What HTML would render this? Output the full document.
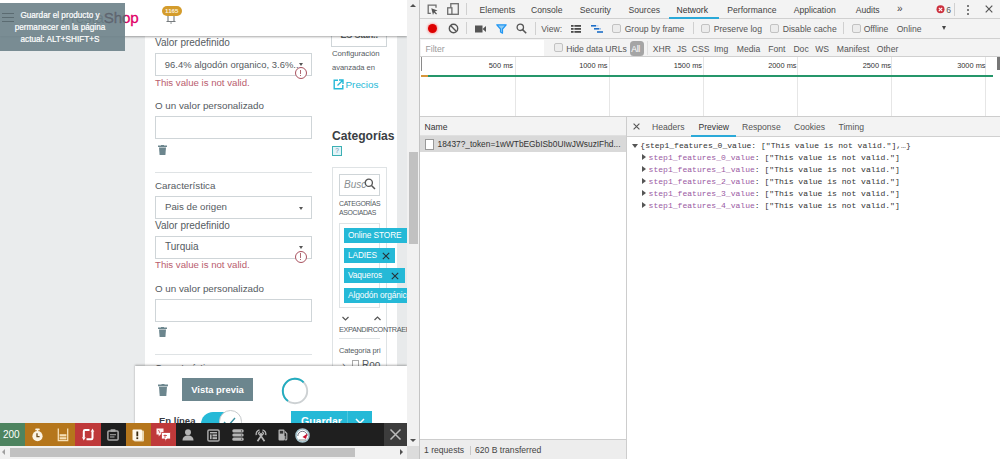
<!DOCTYPE html>
<html><head><meta charset="utf-8">
<style>
*{box-sizing:border-box;margin:0;padding:0}
html,body{width:1000px;height:459px;overflow:hidden;background:#fff;font-family:"Liberation Sans",sans-serif}
.a{position:absolute}
svg{display:block}
.t{position:absolute;white-space:nowrap;line-height:1}
/* page */
#page{position:absolute;left:0;top:0;width:407px;height:459px;background:#eaeced;overflow:hidden}
#panel{position:absolute;left:145px;top:0;width:252px;height:459px;background:#fff}
.lbl{position:absolute;white-space:nowrap;font-size:10px;color:#555b5f;line-height:1}
.inp{position:absolute;border:1px solid #cfd5d8;background:#fff}
.err{position:absolute;white-space:nowrap;font-size:9.65px;color:#b95c6e;line-height:1}
.tag{position:absolute;left:344px;height:15px;background:#25b9d7;color:#fff;font-size:8.3px;letter-spacing:-0.1px;line-height:15px;padding-left:4px;white-space:nowrap;overflow:hidden}
/* devtools */
#dt{position:absolute;left:419px;top:0;width:581px;height:459px;background:#fff;border-left:1px solid #c4c4c4;overflow:hidden}
.dtt{position:absolute;white-space:nowrap;font-size:8.6px;color:#333;line-height:1}
.sep{position:absolute;width:1px;background:#d0d0d0}
.cb{position:absolute;width:8.5px;height:8.5px;border:1px solid #c2c2c2;background:#ececec;border-radius:2px}
.mono{position:absolute;white-space:nowrap;font-family:"Liberation Mono",monospace;font-size:8.05px;line-height:1;color:#333}
.key{color:#9a5aa3}
</style></head><body>

<div id="page">
  <div id="panel"></div>
  <!-- right gray column -->
  <div class="a" style="left:397px;top:0;width:10px;height:459px;background:#e8eaeb"></div>

  <!-- form section 1 -->
  <div class="lbl" style="left:155px;top:38px">Valor predefinido</div>
  <div class="inp" style="left:155px;top:53px;width:157px;height:23px"></div>
  <div class="t" style="left:164.8px;top:60.3px;font-size:9.45px;color:#555b5f">96.4% algodón organico, 3.6%..</div>
  <div class="a" style="z-index:1;left:298.5px;top:63px;width:0;height:0;border-left:2.5px solid transparent;border-right:2.5px solid transparent;border-top:3px solid #555"></div>
  <div class="a" style="left:294.5px;top:67px;width:12px;height:12px;border:1.2px solid #a9525f;border-radius:50%;background:#fff"></div>
  <div class="a" style="left:300px;top:69.5px;width:1.4px;height:4.5px;background:#b06a74"></div>
  <div class="a" style="left:300px;top:75px;width:1.4px;height:1.4px;background:#b06a74"></div>
  <div class="err" style="left:155px;top:77.5px">This value is not valid.</div>
  <div class="lbl" style="left:155px;top:100.5px;font-size:9.8px">O un valor personalizado</div>
  <div class="inp" style="left:155px;top:116px;width:157px;height:23px"></div>
  <div class="a" style="left:158px;top:145px;width:9px;height:10px"><svg width="9" height="10" viewBox="0 0 9 10"><rect x="0" y="0.5" width="9" height="1.5" fill="#6c868e"/><rect x="3" y="0" width="3" height="1" fill="#6c868e"/><path d="M1 2.5h7l-0.6 7.5h-5.8z" fill="#6c868e"/></svg></div>
  <div class="a" style="left:155px;top:172px;width:157px;height:1px;background:#dfe3e5"></div>

  <!-- form section 2 -->
  <div class="lbl" style="left:155px;top:181px;font-size:9.8px">Característica</div>
  <div class="inp" style="left:155px;top:196px;width:157px;height:23px"></div>
  <div class="t" style="left:165px;top:202px;font-size:9.7px;color:#555b5f">Pais de origen</div>
  <div class="a" style="left:299px;top:207px;width:0;height:0;border-left:2.5px solid transparent;border-right:2.5px solid transparent;border-top:3px solid #555"></div>
  <div class="lbl" style="left:155px;top:221px">Valor predefinido</div>
  <div class="inp" style="left:155px;top:236px;width:157px;height:23px"></div>
  <div class="t" style="left:165px;top:242px;font-size:10px;color:#555b5f">Turquia</div>
  <div class="a" style="z-index:1;left:298.5px;top:246px;width:0;height:0;border-left:2.5px solid transparent;border-right:2.5px solid transparent;border-top:3px solid #555"></div>
  <div class="a" style="left:294.5px;top:250.5px;width:12px;height:12px;border:1.2px solid #a9525f;border-radius:50%;background:#fff"></div>
  <div class="a" style="left:300px;top:253px;width:1.4px;height:4.5px;background:#b06a74"></div>
  <div class="a" style="left:300px;top:258.5px;width:1.4px;height:1.4px;background:#b06a74"></div>
  <div class="err" style="left:155px;top:260px">This value is not valid.</div>
  <div class="lbl" style="left:155px;top:284px;font-size:9.8px">O un valor personalizado</div>
  <div class="inp" style="left:155px;top:299px;width:157px;height:23px"></div>
  <div class="a" style="left:158px;top:327px;width:9px;height:10px"><svg width="9" height="10" viewBox="0 0 9 10"><rect x="0" y="0.5" width="9" height="1.5" fill="#6c868e"/><rect x="3" y="0" width="3" height="1" fill="#6c868e"/><path d="M1 2.5h7l-0.6 7.5h-5.8z" fill="#6c868e"/></svg></div>
  <div class="a" style="left:155px;top:354px;width:157px;height:1px;background:#dfe3e5"></div>
  <div class="lbl" style="left:155px;top:362.5px;font-size:9.8px">Característica</div>

  <!-- right column -->
  <div class="a" style="left:331px;top:20px;width:56px;height:27px;border:1px solid #cfd5d8;background:#fff"></div>
  <div class="t" style="left:340.5px;top:30.5px;font-size:9px;letter-spacing:-0.2px;font-weight:bold;color:#5a5f64">ES Stan..</div>
  <div class="t" style="left:332px;top:50.2px;font-size:7.8px;letter-spacing:-0.05px;color:#555b5f">Configuración</div>
  <div class="t" style="left:332px;top:63.7px;font-size:7.6px;letter-spacing:-0.05px;color:#555b5f">avanzada en</div>
  <div class="a" style="left:333px;top:79px;width:11px;height:11px"><svg width="11" height="11" viewBox="0 0 11 11"><path d="M5 1.2H1.2v8.6h8.6V6" fill="none" stroke="#25b9d7" stroke-width="1.4"/><path d="M6 1h4v4M10 1L4.5 6.5" fill="none" stroke="#25b9d7" stroke-width="1.4"/></svg></div>
  <div class="t" style="left:345.5px;top:80.3px;font-size:9.9px;color:#25b9d7">Precios</div>

  <div class="t" style="left:332px;top:130.3px;font-size:12.1px;font-weight:bold;color:#3a3e44">Categorías</div>
  <div class="a" style="left:331.5px;top:145.5px;width:10.5px;height:10.5px;border:1.7px solid #3cb0b4;background:#e3f4f8"></div>
  <div class="t" style="left:335.3px;top:147.5px;font-size:6.5px;color:#6a8fb0">?</div>

  <div class="a" style="left:332px;top:167px;width:55px;height:260px;border:1px solid #dfe3e5"></div>
  <div class="a" style="left:339px;top:174px;width:41px;height:22px;border:1px solid #cfd5d8;background:#fff"></div>
  <div class="t" style="left:344px;top:180px;font-size:10px;font-style:italic;color:#8a8f92">Busc</div>
  <div class="a" style="left:364px;top:178px;width:12px;height:12px"><svg width="12" height="12" viewBox="0 0 12 12"><circle cx="4.8" cy="4.8" r="3.6" fill="none" stroke="#555" stroke-width="1.3"/><path d="M7.5 7.5L11 11" stroke="#555" stroke-width="1.5"/></svg></div>
  <div class="t" style="left:339px;top:201px;font-size:6.9px;letter-spacing:-0.35px;color:#555b5f">CATEGORÍAS</div>
  <div class="t" style="left:339px;top:210.3px;font-size:6.9px;letter-spacing:-0.35px;color:#555b5f">ASOCIADAS</div>
  <div class="a" style="left:339px;top:223px;width:41px;height:85px;border:1px solid #dfe3e5"></div>
  <div class="tag" style="top:227.5px;width:63px">Online STORE</div>
  <div class="tag" style="top:247.5px;width:51px">LADIES<svg style="position:absolute;left:38px;top:4px" width="8" height="8" viewBox="0 0 8 8"><path d="M0.8 0.8l6.4 6.4M7.2 0.8L0.8 7.2" stroke="#263238" stroke-width="1.1"/></svg></div>
  <div class="tag" style="top:267.5px;width:61px">Vaqueros<svg style="position:absolute;left:47px;top:4px" width="8" height="8" viewBox="0 0 8 8"><path d="M0.8 0.8l6.4 6.4M7.2 0.8L0.8 7.2" stroke="#263238" stroke-width="1.1"/></svg></div>
  <div class="tag" style="top:288px;width:63px">Algodón orgánico</div>
  <div class="a" style="left:342px;top:316px;width:7px;height:5px"><svg width="7" height="5" viewBox="0 0 7 5"><path d="M0.5 1l3 3 3-3" fill="none" stroke="#555" stroke-width="1.2"/></svg></div>
  <div class="a" style="left:374px;top:316px;width:7px;height:5px"><svg width="7" height="5" viewBox="0 0 7 5"><path d="M0.5 4l3-3 3 3" fill="none" stroke="#555" stroke-width="1.2"/></svg></div>
  <div class="t" style="left:339px;top:326px;font-size:7.3px;color:#555b5f;letter-spacing:-0.38px">EXPANDIRCONTRAER</div>
  <div class="a" style="left:339px;top:338px;width:41px;height:1px;background:#dfe3e5"></div>
  <div class="t" style="left:339px;top:346.5px;font-size:7.5px;letter-spacing:-0.15px;color:#555b5f">Categoría pri</div>
  <div class="t" style="left:342px;top:361px;font-size:10px;color:#555b5f">›</div>
  <div class="a" style="left:352px;top:360px;width:7px;height:8px;border:1px solid #aaa"></div>
  <div class="t" style="left:362px;top:360px;font-size:10px;color:#555b5f">Roo</div>

  <!-- header -->
  <div class="a" style="left:0;top:0;width:407px;height:36px;background:#fff;box-shadow:0 1px 2px rgba(0,0,0,.35)"></div>
  <div class="t" style="left:61px;top:10px;font-size:15.2px;color:#6c6f72;letter-spacing:-0.2px;-webkit-text-stroke:0.3px #df0067"><span style="-webkit-text-stroke:0">Presta</span><span id="shop" style="color:#df0067">Shop</span></div>
  <div class="a" style="left:166px;top:15px;width:10px;height:8px"><svg width="10" height="9" viewBox="0 0 10 9"><path d="M2 0v6M8 0v6M0.5 6.5h9" stroke="#767b7e" stroke-width="1.1" fill="none"/><rect x="4.3" y="7.5" width="1.5" height="1" fill="#767b7e"/></svg></div>
  <div class="a" style="left:162px;top:6px;width:19.5px;height:9.5px;background:#d49c2c;border-radius:5px"></div>
  <div class="t" style="left:162px;top:8px;width:19.5px;text-align:center;font-size:6.2px;font-weight:bold;color:#fbf0dc">1165</div>

  <!-- tooltip -->
  <div class="a" style="left:0;top:2.5px;width:125px;height:48px;background:rgba(112,132,140,.93)"></div>
  <div class="a" style="left:2px;top:12.5px;width:11.5px;height:1.5px;background:#5b6b71"></div>
  <div class="a" style="left:2px;top:16.5px;width:11.5px;height:1.5px;background:#5b6b71"></div>
  <div class="a" style="left:2px;top:20.5px;width:11.5px;height:1.5px;background:#5b6b71"></div>
  <div class="a" style="left:0;top:0;width:125.5px;height:40px;overflow:hidden"><div class="t" style="left:61px;top:10px;font-size:15.2px;color:rgba(70,82,88,.12);letter-spacing:-0.2px">Presta<span style="color:rgba(70,82,88,.45);-webkit-text-stroke:0.3px rgba(70,82,88,.45)">Shop</span></div></div>
  <div class="t" style="left:0;top:10.3px;width:120px;text-align:center;font-size:8.2px;color:#fff;line-height:11.9px;white-space:normal;-webkit-text-stroke:0.2px #fff">Guardar el producto y<br>permanecer en la página<br>actual: ALT+SHIFT+S</div>

  <!-- sticky footer -->
  <div class="a" style="left:135px;top:366px;width:272px;height:60px;background:#fff;box-shadow:0 -1px 2px rgba(0,0,0,.3)"></div>
  <div class="a" style="left:158px;top:384px;width:10px;height:12px"><svg width="10" height="12" viewBox="0 0 10 12"><rect x="0" y="0.5" width="10" height="1.8" fill="#6c868e"/><rect x="3.5" y="0" width="3" height="1" fill="#6c868e"/><path d="M1 2.8h8l-0.7 9.2h-6.6z" fill="#6c868e"/></svg></div>
  <div class="a" style="left:182px;top:378px;width:71px;height:23px;background:#6c868e"></div>
  <div class="t" style="left:182px;top:384.5px;width:71px;text-align:center;font-size:9.4px;font-weight:bold;color:#fff">Vista previa</div>
  <svg class="a" style="left:281px;top:376.5px" width="28" height="28" viewBox="0 0 28 28"><circle cx="14" cy="14" r="12.2" fill="none" stroke="#cdd1d3" stroke-width="1.9"/><path d="M22.63 5.37A12.2 12.2 0 1 0 7.00 23.99" fill="none" stroke="#22adc0" stroke-width="1.9"/></svg>
  <div class="t" style="left:159px;top:415.5px;font-size:9.5px;font-weight:bold;color:#363a41">En línea</div>
  <div class="a" style="left:200.5px;top:412px;width:40px;height:24px;border-radius:12px;background:#25b9d7"></div>
  <div class="a" style="left:218.5px;top:410px;width:23.5px;height:23.5px;border-radius:50%;background:#fff;border:1px solid #c5c9cb"></div>
  <svg class="a" style="left:222px;top:415px" width="16" height="12" viewBox="0 0 16 12"><path d="M2 7l4 4 7-8" fill="none" stroke="#3b8fa0" stroke-width="1.4"/></svg>
  <div class="a" style="left:291px;top:411px;width:56px;height:20px;background:#25b9d7"></div>
  <div class="a" style="left:347px;top:411px;width:1px;height:20px;background:#4fc6de"></div>
  <div class="a" style="left:348px;top:411px;width:24px;height:20px;background:#25b9d7"></div>
  <div class="t" style="left:301px;top:416px;font-size:10.5px;font-weight:bold;color:#fff">Guardar</div>
  <svg class="a" style="left:355px;top:418px" width="10" height="6" viewBox="0 0 10 6"><path d="M1 1l4 4 4-4" fill="none" stroke="#fff" stroke-width="1.5"/></svg>

  <!-- debug toolbar -->
  <div class="a" style="left:0;top:423px;width:407px;height:23px;background:#1f1f1f"></div>
  <div class="a" style="left:0;top:423px;width:25px;height:23px;background:#4e8460"></div>
  <div class="t" style="left:3px;top:430px;font-size:10px;color:#fff">200</div>
  <div class="a" style="left:25px;top:423px;width:50px;height:23px;background:#b5761c"></div>
  <div class="a" style="left:75px;top:423px;width:26px;height:23px;background:#bf393a"></div>
  <div class="a" style="left:126px;top:423px;width:25px;height:23px;background:#b5761c"></div>
  <div class="a" style="left:151px;top:423px;width:25px;height:23px;background:#bf393a"></div>

  <!-- toolbar icons -->
  <svg class="a" style="left:31px;top:428px" width="13" height="14" viewBox="0 0 13 14"><rect x="4.3" y="0.5" width="4.4" height="1.8" rx="0.6" fill="#fbf3e4"/><rect x="5.8" y="2" width="1.4" height="1.5" fill="#fbf3e4"/><circle cx="6.5" cy="8.2" r="5.1" fill="#fbf3e4"/><path d="M6 5.3v3.4h2.6" fill="none" stroke="#6b4a1a" stroke-width="1.3"/></svg>
  <svg class="a" style="left:57px;top:428px" width="12" height="14" viewBox="0 0 12 14"><path d="M1.3 0.5v12.2h9.4V0.5" fill="none" stroke="#f6dfb5" stroke-width="1.3"/><rect x="2.6" y="6.2" width="6.8" height="2.2" fill="#f6dfb5"/><rect x="2.6" y="9.2" width="6.8" height="2.2" fill="#f6dfb5"/></svg>
  <svg class="a" style="left:82px;top:428px" width="13" height="13" viewBox="0 0 13 13"><path d="M7.5 2H3Q1.8 2 1.8 3.2V9.5" fill="none" stroke="#fff" stroke-width="2"/><path d="M0 9.2h3.6L1.8 12.5z" fill="#fff"/><path d="M4.5 11.2H9.3Q10.5 11.2 10.5 10V3.5" fill="none" stroke="#fff" stroke-width="2"/><path d="M8.7 3.8h3.6L10.5 0.5z" fill="#fff"/></svg>
  <svg class="a" style="left:107px;top:429px" width="12" height="12" viewBox="0 0 12 12"><rect x="0.9" y="1.9" width="10.2" height="9.2" rx="1" fill="none" stroke="#a9a9a9" stroke-width="1.5"/><rect x="3.5" y="0.3" width="5" height="2.5" rx="0.5" fill="#a9a9a9"/><rect x="3" y="5" width="6" height="1.3" fill="#8d8d8d"/><rect x="3" y="7.3" width="4.5" height="1.3" fill="#8d8d8d"/></svg>
  <svg class="a" style="left:132px;top:428.5px" width="12" height="13" viewBox="0 0 12 13"><rect x="2" y="1.5" width="10" height="11" rx="1" fill="#e8d6b2"/><rect x="0.5" y="0.5" width="9.5" height="11" rx="1" fill="#fff8ec"/><rect x="4.4" y="2.5" width="1.8" height="4.8" fill="#3a2a10"/><rect x="4.4" y="8.3" width="1.8" height="1.8" fill="#3a2a10"/></svg>
  <svg class="a" style="left:156px;top:428px" width="15" height="14" viewBox="0 0 15 14"><path d="M0.5 0.5h7v6h-3l-1.8 2v-2H0.5z" fill="#fff0f0"/><path d="M5.5 4.5h9v6.5h-3.5l-2 2.5v-2.5h-3.5z" fill="#fff" stroke="#c0393a" stroke-width="0.8"/><path d="M2.5 2l1.5 3M9 6.5v3.5M7.5 7.5h3.5" stroke="#c0393a" stroke-width="0.8"/></svg>
  <svg class="a" style="left:182px;top:428.5px" width="12" height="12" viewBox="0 0 12 12"><circle cx="6" cy="3.3" r="3" fill="#b5b5b5"/><path d="M0.5 11.5c0-3.5 2.2-5 5.5-5s5.5 1.5 5.5 5z" fill="#b5b5b5"/></svg>
  <svg class="a" style="left:206.5px;top:428.5px" width="13" height="13" viewBox="0 0 13 13"><rect x="0.9" y="0.9" width="11.2" height="11.2" rx="1.3" fill="none" stroke="#a9a9a9" stroke-width="1.5"/><rect x="3" y="3" width="7" height="1.4" fill="#b5b5b5"/><rect x="3" y="5.4" width="1.6" height="4.8" fill="#b5b5b5"/><rect x="5.5" y="5.4" width="4.5" height="2" fill="#b5b5b5"/><rect x="5.5" y="8.2" width="4.5" height="2" fill="#b5b5b5"/></svg>
  <svg class="a" style="left:231.5px;top:428.5px" width="12" height="12" viewBox="0 0 12 12"><rect x="0.3" y="0.3" width="11.4" height="3.2" rx="1.5" fill="#b5b5b5"/><rect x="0.3" y="4.4" width="11.4" height="3.2" rx="1.5" fill="#b5b5b5"/><rect x="0.3" y="8.5" width="11.4" height="3.2" rx="1.5" fill="#b5b5b5"/><circle cx="9.5" cy="1.9" r="0.6" fill="#333"/><circle cx="9.5" cy="6" r="0.6" fill="#333"/><circle cx="9.5" cy="10.1" r="0.6" fill="#333"/></svg>
  <svg class="a" style="left:254px;top:428px" width="14" height="14" viewBox="0 0 14 14"><path d="M3.5 13.2L8.6 5.8M10.5 13.2L5.4 5.8" fill="none" stroke="#b5b5b5" stroke-width="1.7"/><circle cx="7" cy="6.5" r="1.6" fill="#b5b5b5"/><path d="M2.2 7.2A5 5 0 0 1 5.5 1.8M11.8 7.2A5 5 0 0 0 8.5 1.8" fill="none" stroke="#b5b5b5" stroke-width="1.3"/><path d="M4.2 6.6A3 3 0 0 1 6 3.8M9.8 6.6A3 3 0 0 0 8 3.8" fill="none" stroke="#b5b5b5" stroke-width="1.1"/></svg>
  <svg class="a" style="left:277.5px;top:429px" width="10" height="12" viewBox="0 0 10 12"><rect x="0.5" y="0.5" width="6" height="11" rx="1" fill="#b5b5b5"/><rect x="1.8" y="1.8" width="3.4" height="2.8" fill="#333"/><path d="M6.8 2.5l2 2v5.5a1 1 0 0 1-2 0V7" fill="none" stroke="#b5b5b5" stroke-width="1.1"/></svg>
  <svg class="a" style="left:295px;top:427.5px" width="15" height="15" viewBox="0 0 15 15"><circle cx="7.5" cy="7.5" r="6.5" fill="#fff" stroke="#a8c6cf" stroke-width="1.6"/><path d="M2.8 8a4.7 4.7 0 0 1 9.4 0" fill="none" stroke="#556" stroke-width="0.8"/><path d="M7.5 9L12.5 5.5 11 11z" fill="#c8102e"/><path d="M4 12h7" stroke="#888" stroke-width="1"/></svg>
  <div class="a" style="left:384px;top:423px;width:23px;height:23px;background:#3c3c3c"></div>
  <svg class="a" style="left:389px;top:428px" width="13" height="13" viewBox="0 0 13 13"><path d="M1.5 1.5l10 10M11.5 1.5l-10 10" stroke="#bbb" stroke-width="1.5"/></svg>

  <!-- horizontal scrollbar -->
  <div class="a" style="left:0;top:446px;width:407px;height:13px;background:#f1f1f1"></div>
  <div class="a" style="left:10px;top:448px;width:345px;height:9px;background:#c1c1c1"></div>
</div>

<!-- vertical page scrollbar -->
<div class="a" style="left:407px;top:0;width:12px;height:446px;background:#f1f1f1"></div>
<div class="a" style="left:409px;top:152px;width:9px;height:92px;background:#c1c1c1"></div>
<div class="a" style="left:407px;top:446px;width:12px;height:13px;background:#dcdcdc"></div>

<div class="a" style="left:410px;top:4px;width:0;height:0;border-left:3.5px solid transparent;border-right:3.5px solid transparent;border-bottom:3.5px solid #505050"></div>
<div class="a" style="left:410px;top:438.5px;width:0;height:0;border-left:3.5px solid transparent;border-right:3.5px solid transparent;border-top:3.5px solid #505050"></div>
<div class="a" style="left:2px;top:449px;width:0;height:0;border-top:3.5px solid transparent;border-bottom:3.5px solid transparent;border-right:3.5px solid #a0a0a0"></div>
<div class="a" style="left:400px;top:449px;width:0;height:0;border-top:3.5px solid transparent;border-bottom:3.5px solid transparent;border-left:3.5px solid #505050"></div>
<div id="dt">
  <!-- tab bar -->
  <div class="a" style="left:0;top:0;width:581px;height:19px;background:#f3f3f3;border-bottom:1px solid #d0d0d0"></div>
  <svg class="a" style="left:7px;top:3.5px" width="11" height="11" viewBox="0 0 11 11"><path d="M3.8 9.3H1.2V1.2h7.8v2.6" fill="none" stroke="#6e6e6e" stroke-width="1.3"/><path d="M4.3 4.3l6.2 2.2-2.6 1 2.1 2.2-0.9 0.9-2.1-2.2-1 2.6z" fill="#555"/></svg>
  <svg class="a" style="left:26.5px;top:3px" width="12" height="12" viewBox="0 0 12 12"><rect x="3.8" y="0.7" width="7.5" height="10.6" fill="none" stroke="#6e6e6e" stroke-width="1.3"/><rect x="0.7" y="4.8" width="4.2" height="6.5" fill="#f3f3f3" stroke="#6e6e6e" stroke-width="1.3"/></svg>
  <div class="sep" style="left:46px;top:3px;height:12px"></div>
  <div class="dtt" style="left:59.5px;top:5.6px;color:#444">Elements</div>
  <div class="dtt" style="left:111px;top:5.6px;color:#444">Console</div>
  <div class="dtt" style="left:159.8px;top:5.6px;color:#444">Security</div>
  <div class="dtt" style="left:208.5px;top:5.6px;color:#444">Sources</div>
  <div class="dtt" style="left:256.5px;top:5.6px;color:#333">Network</div>
  <div class="a" style="left:248.5px;top:17px;width:50.5px;height:2px;background:#2ba9d8"></div>
  <div class="dtt" style="left:307.3px;top:5.6px;color:#444">Performance</div>
  <div class="dtt" style="left:373.7px;top:5.6px;color:#444">Application</div>
  <div class="dtt" style="left:435.7px;top:5.6px;color:#444">Audits</div>
  <div class="dtt" style="left:477px;top:3.5px;color:#444;font-size:10px">»</div>
  <svg class="a" style="left:515.5px;top:4.5px" width="9" height="9" viewBox="0 0 9 9"><circle cx="4.5" cy="4.3" r="4" fill="#cc2f3c"/><path d="M2.8 2.8l3.4 3.4M6.2 2.8l-3.4 3.4" stroke="#fff" stroke-width="1.1"/></svg>
  <div class="dtt" style="left:526.3px;top:5.6px;color:#555">6</div>
  <div class="sep" style="left:534px;top:3px;height:13px"></div>
  <div class="a" style="left:547.3px;top:4.5px;width:2px;height:2px;background:#555;border-radius:1px"></div>
  <div class="a" style="left:547.3px;top:8.5px;width:2px;height:2px;background:#555;border-radius:1px"></div>
  <div class="a" style="left:547.3px;top:12.5px;width:2px;height:2px;background:#555;border-radius:1px"></div>
  <svg class="a" style="left:564.8px;top:4.8px" width="8" height="8" viewBox="0 0 8 8"><path d="M0.7 0.7l6.6 6.6M7.3 0.7l-6.6 6.6" stroke="#555" stroke-width="1.2"/></svg>

  <!-- toolbar 2 -->
  <div class="a" style="left:0;top:19px;width:581px;height:20px;background:#f3f3f3;border-bottom:1px solid #d0d0d0"></div>
  <div class="a" style="left:7.5px;top:23.8px;width:9px;height:9px;border-radius:50%;background:#dd0000;box-shadow:0 0 2px 1px rgba(255,90,90,.45)"></div>
  <svg class="a" style="left:27.5px;top:23.3px" width="11" height="11" viewBox="0 0 11 11"><circle cx="5.5" cy="5.5" r="4.2" fill="none" stroke="#555" stroke-width="1.4"/><path d="M2.6 2.6l5.8 5.8" stroke="#555" stroke-width="1.4"/></svg>
  <div class="sep" style="left:46px;top:22px;height:12px"></div>
  <svg class="a" style="left:55px;top:25px" width="11" height="8" viewBox="0 0 11 8"><rect x="0" y="0.5" width="7.5" height="7" fill="#555"/><path d="M7.5 4L11 1v6z" fill="#555"/></svg>
  <svg class="a" style="left:75.5px;top:24px" width="11" height="10" viewBox="0 0 11 10"><path d="M0.8 0.8h9.4L6.5 5v4.2L4.5 8V5z" fill="#8ecdf4" stroke="#2196f3" stroke-width="1.2" stroke-linejoin="round"/></svg>
  <svg class="a" style="left:96px;top:23px" width="11" height="11" viewBox="0 0 11 11"><circle cx="4.3" cy="4.3" r="3.2" fill="none" stroke="#555" stroke-width="1.3"/><path d="M6.6 6.6L10.2 10.2" stroke="#555" stroke-width="1.5"/></svg>
  <div class="sep" style="left:114.5px;top:22px;height:13px"></div>
  <div class="dtt" style="left:121.3px;top:25.3px;color:#555">View:</div>
  <svg class="a" style="left:151px;top:25px" width="10" height="8" viewBox="0 0 10 8"><rect x="0" y="0" width="2.6" height="1.8" fill="#4a4a4a"/><rect x="3.4" y="0" width="6.6" height="1.8" fill="#4a4a4a"/><rect x="0" y="3" width="2.6" height="1.8" fill="#4a4a4a"/><rect x="3.4" y="3" width="6.6" height="1.8" fill="#4a4a4a"/><rect x="0" y="6" width="2.6" height="1.8" fill="#4a4a4a"/><rect x="3.4" y="6" width="6.6" height="1.8" fill="#4a4a4a"/></svg>
  <svg class="a" style="left:171px;top:25px" width="13" height="8" viewBox="0 0 13 8"><rect x="0" y="0" width="5" height="1.6" fill="#1e6fc8"/><rect x="5" y="0" width="2.5" height="1.6" fill="#c9d8ee"/><rect x="3" y="3" width="5" height="1.6" fill="#1e6fc8"/><rect x="8" y="3" width="2" height="1.6" fill="#9ec0e8"/><rect x="6" y="6.2" width="6" height="1.6" fill="#1e6fc8"/></svg>
  <div class="cb" style="left:192px;top:24px"></div>
  <div class="dtt" style="left:204.7px;top:25.3px;color:#555">Group by frame</div>
  <div class="sep" style="left:273px;top:22px;height:12px"></div>
  <div class="cb" style="left:281px;top:24px"></div>
  <div class="dtt" style="left:293.7px;top:25.3px;color:#555">Preserve log</div>
  <div class="cb" style="left:350px;top:24px"></div>
  <div class="dtt" style="left:362.7px;top:25.3px;color:#555">Disable cache</div>
  <div class="sep" style="left:423px;top:22px;height:12px"></div>
  <div class="cb" style="left:432px;top:24px"></div>
  <div class="dtt" style="left:443.7px;top:25.3px;color:#555">Offline</div>
  <div class="dtt" style="left:476.7px;top:25.3px;color:#555">Online</div>
  <div class="a" style="left:522.3px;top:26.3px;width:0;height:0;border-left:2.7px solid transparent;border-right:2.7px solid transparent;border-top:4.3px solid #444"></div>

  <!-- filter row -->
  <div class="a" style="left:0;top:39px;width:581px;height:18px;background:#f3f3f3;border-bottom:1px solid #d0d0d0"></div>
  <div class="a" style="left:1px;top:40px;width:123px;height:16px;background:#fff"></div>
  <div class="dtt" style="left:5.5px;top:45.3px;color:#9a9a9a">Filter</div>
  <div class="cb" style="left:134px;top:43px"></div>
  <div class="dtt" style="left:146.2px;top:45.3px;color:#555">Hide data URLs</div>
  <div class="a" style="left:210px;top:40.5px;width:13.5px;height:15.5px;background:#a5a5a5;border-radius:3.5px"></div>
  <div class="dtt" style="left:211.3px;top:45.3px;color:#fff;font-size:8.6px;letter-spacing:-0.3px">All</div>
  <div class="sep" style="left:226.5px;top:41px;height:14px;background:#e0e0e0"></div>
  <div class="dtt" style="left:232.8px;top:45.3px;color:#555">XHR</div>
  <div class="dtt" style="left:256.8px;top:45.3px;color:#555">JS</div>
  <div class="dtt" style="left:271.7px;top:45.3px;color:#555">CSS</div>
  <div class="dtt" style="left:293.9px;top:45.3px;color:#555">Img</div>
  <div class="dtt" style="left:316.8px;top:45.3px;color:#555">Media</div>
  <div class="dtt" style="left:348.3px;top:45.3px;color:#555">Font</div>
  <div class="dtt" style="left:373.4px;top:45.3px;color:#555">Doc</div>
  <div class="dtt" style="left:395.2px;top:45.3px;color:#555">WS</div>
  <div class="dtt" style="left:416.8px;top:45.3px;color:#555">Manifest</div>
  <div class="dtt" style="left:456.8px;top:45.3px;color:#555">Other</div>

  <!-- timeline -->
  <div class="a" style="left:0;top:57px;width:581px;height:60px;background:#fff;border-bottom:1px solid #cdcdcd"></div>
  <div class="a" style="left:94.5px;top:57px;width:1px;height:59px;background:#e6e6e6"></div>
  <div class="a" style="left:188.5px;top:57px;width:1px;height:59px;background:#e6e6e6"></div>
  <div class="a" style="left:282.5px;top:57px;width:1px;height:59px;background:#e6e6e6"></div>
  <div class="a" style="left:376.5px;top:57px;width:1px;height:59px;background:#e6e6e6"></div>
  <div class="a" style="left:470.5px;top:57px;width:1px;height:59px;background:#e6e6e6"></div>
  <div class="a" style="left:564.5px;top:57px;width:1px;height:59px;background:#e6e6e6"></div>
  <div class="dtt" style="left:33px;top:62px;width:60px;text-align:right;font-size:7.4px;color:#333">500 ms</div>
  <div class="dtt" style="left:127.5px;top:62px;width:60px;text-align:right;font-size:7.4px;color:#333">1000 ms</div>
  <div class="dtt" style="left:222px;top:62px;width:60px;text-align:right;font-size:7.4px;color:#333">1500 ms</div>
  <div class="dtt" style="left:316.5px;top:62px;width:60px;text-align:right;font-size:7.4px;color:#333">2000 ms</div>
  <div class="dtt" style="left:411px;top:62px;width:60px;text-align:right;font-size:7.4px;color:#333">2500 ms</div>
  <div class="dtt" style="left:505.5px;top:62px;width:60px;text-align:right;font-size:7.4px;color:#333">3000 ms</div>
  <div class="a" style="left:0.5px;top:57px;width:1.5px;height:13.5px;background:#8a8a8a"></div>
  <div class="a" style="left:1px;top:75px;width:572px;height:1.6px;background:#25966a"></div>
  <div class="a" style="left:1px;top:75px;width:6.5px;height:1.6px;background:#d6963c"></div>
  <div class="a" style="left:577px;top:57px;width:3px;height:13px;background:#777"></div>

  <!-- name column -->
  <div class="a" style="left:0;top:117px;width:207px;height:19px;background:#f3f3f3;border-bottom:1px solid #e0e0e0"></div>
  <div class="dtt" style="left:4.5px;top:122.5px;color:#333">Name</div>
  <div class="a" style="left:0;top:136px;width:207px;height:16px;background:#d9d9d9"></div>
  <div class="a" style="left:5px;top:139px;width:9px;height:10.5px;background:#fff;border:1px solid #999"></div>
  <div class="dtt" style="left:17.5px;top:140px;color:#333;font-size:8.35px">18437?_token=1wWTbEGbISb0UIwJWsuzIFhd...</div>
  <div class="a" style="left:0;top:439px;width:207px;height:20px;background:#ededed;border-top:1px solid #cdcdcd"></div>
  <div class="dtt" style="left:4px;top:445.5px;color:#444">1 requests</div>
  <div class="a" style="left:49.5px;top:446px;width:1px;height:9px;background:#c8c8c8"></div>
  <div class="dtt" style="left:55px;top:445.5px;color:#444">620 B transferred</div>
  <div class="a" style="left:206.3px;top:117px;width:1px;height:342px;background:#cdcdcd"></div>

  <!-- details -->
  <div class="a" style="left:207px;top:117px;width:374px;height:20px;background:#f3f3f3;border-bottom:1px solid #d0d0d0"></div>
  <svg class="a" style="left:213px;top:123px" width="7" height="7" viewBox="0 0 7 7"><path d="M0.6 0.6l5.8 5.8M6.4 0.6l-5.8 5.8" stroke="#555" stroke-width="1.1"/></svg>
  <div class="dtt" style="left:232px;top:122.5px;color:#555">Headers</div>
  <div class="dtt" style="left:278.5px;top:122.5px;color:#333">Preview</div>
  <div class="a" style="left:271px;top:135px;width:45px;height:2px;background:#2ba9d8"></div>
  <div class="dtt" style="left:322px;top:122.5px;color:#555">Response</div>
  <div class="dtt" style="left:374px;top:122.5px;color:#555">Cookies</div>
  <div class="dtt" style="left:418.5px;top:122.5px;color:#555">Timing</div>

  <div class="a" style="left:211.5px;top:144px;width:0;height:0;border-left:3px solid transparent;border-right:3px solid transparent;border-top:4.5px solid #555"></div>
  <div class="mono" style="left:220.3px;top:141.5px">{step1_features_0_value: ["This value is not valid."],…}</div>
  <div class="a" style="left:222px;top:153.5px;width:0;height:0;border-top:3px solid transparent;border-bottom:3px solid transparent;border-left:4.5px solid #555"></div>
  <div class="mono" style="left:228.6px;top:153.5px"><span class="key">step1_features_0_value</span>: ["This value is not valid."]</div>
  <div class="a" style="left:222px;top:165.5px;width:0;height:0;border-top:3px solid transparent;border-bottom:3px solid transparent;border-left:4.5px solid #555"></div>
  <div class="mono" style="left:228.6px;top:165.5px"><span class="key">step1_features_1_value</span>: ["This value is not valid."]</div>
  <div class="a" style="left:222px;top:177.5px;width:0;height:0;border-top:3px solid transparent;border-bottom:3px solid transparent;border-left:4.5px solid #555"></div>
  <div class="mono" style="left:228.6px;top:177.5px"><span class="key">step1_features_2_value</span>: ["This value is not valid."]</div>
  <div class="a" style="left:222px;top:189.5px;width:0;height:0;border-top:3px solid transparent;border-bottom:3px solid transparent;border-left:4.5px solid #555"></div>
  <div class="mono" style="left:228.6px;top:189.5px"><span class="key">step1_features_3_value</span>: ["This value is not valid."]</div>
  <div class="a" style="left:222px;top:201.5px;width:0;height:0;border-top:3px solid transparent;border-bottom:3px solid transparent;border-left:4.5px solid #555"></div>
  <div class="mono" style="left:228.6px;top:201.5px"><span class="key">step1_features_4_value</span>: ["This value is not valid."]</div>
</div>
</body></html>
